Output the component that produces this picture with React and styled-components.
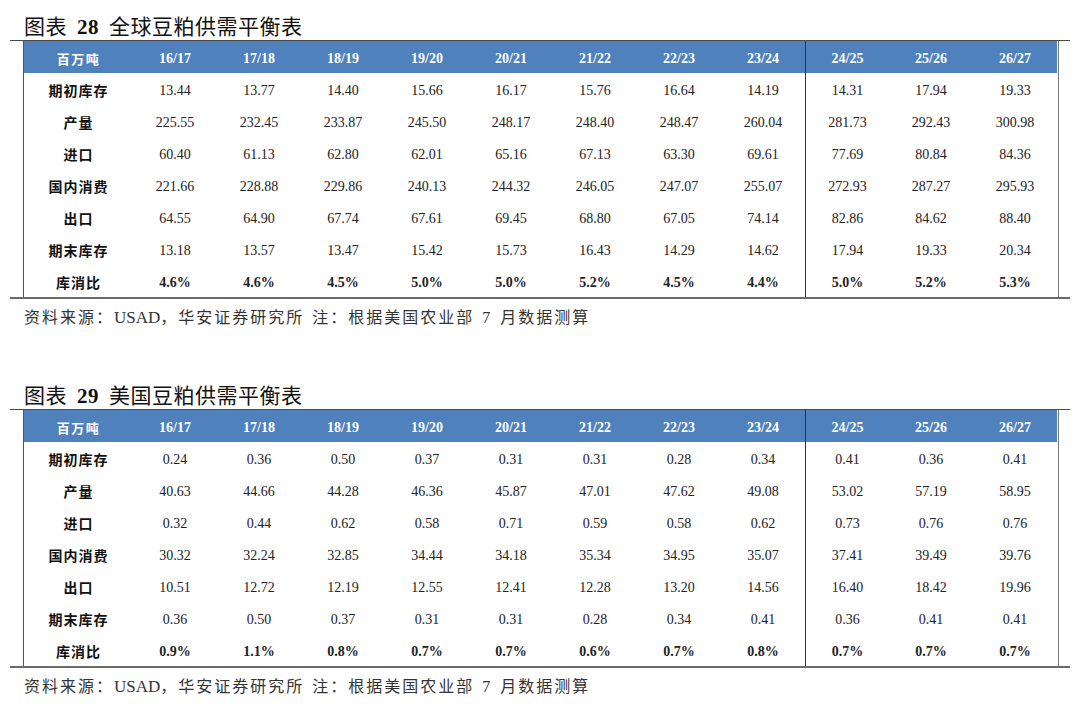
import React from 'react';
import styled, { createGlobalStyle } from 'styled-components';

const GlobalStyle = createGlobalStyle`
  html, body {
    margin: 0;
    padding: 0;
    background: #ffffff;
  }
  body {
    font-family: "Liberation Serif", "Noto Sans CJK SC", serif;
    color: #1a1a1a;
  }
`;

const Page = styled.div`
  width: 1080px;
  padding-left: 10px;
  box-sizing: border-box;
`;

const Figure = styled.section`
  width: 1060px;
  height: 369px;
`;

const Title = styled.h2`
  margin: 0;
  height: 41px;
  padding: 12px 0 0 14px;
  box-sizing: border-box;
  border-bottom: 1px solid #4a4a4a;
  font-family: "Liberation Serif", "Noto Sans CJK SC", serif;
  font-size: 21px;
  line-height: 30px;
  font-weight: 400;
  letter-spacing: 0.5px;
  color: #111;

  b {
    font-weight: 700;
    margin: 0 10px;
  }
`;

const Table = styled.div`
  margin-left: 13px;
  width: 1036px;
  border-left: 1px solid #555;
  border-right: 1px solid #777;
  box-sizing: border-box;
  display: grid;
  grid-template-columns: 109px repeat(11, 84px);
`;

const Cell = styled.div`
  height: 32px;
  padding-top: 4px;
  display: flex;
  align-items: center;
  justify-content: center;
  box-sizing: border-box;
  font-size: 14px;
  font-weight: ${(p) => (p.$bold ? 700 : 400)};
  color: #222;
  border-left: ${(p) => (p.$split ? '1px solid #333' : 'none')};
`;

const HeadCell = styled(Cell)`
  background: #4f81bd;
  color: #ffffff;
  font-weight: 700;
  font-size: 14px;
`;

const LabelCell = styled(Cell)`
  font-family: "Noto Sans CJK SC", sans-serif;
  font-weight: 700;
  font-size: 14px;
  letter-spacing: 1px;
  padding-top: 2px;
  color: #111;
`;

const HeadLabel = styled(HeadCell)`
  font-family: "Noto Sans CJK SC", sans-serif;
  font-size: 13px;
  letter-spacing: 1.5px;
  padding-top: 2px;
`;

const BottomRule = styled.div`
  height: 2px;
  background: #6b6b6b;
`;

const Source = styled.p`
  margin: 0;
  padding: 2px 0 0 14px;
  height: 34px;
  line-height: 34px;
  box-sizing: border-box;
  font-family: "Liberation Serif", "Noto Sans CJK SC", serif;
  font-size: 16px;
  letter-spacing: 2px;
  word-spacing: 2px;
  color: #333;
`;

const Latin = styled.span`
  font-size: 17px;
  letter-spacing: 0;
`;

const years = ['16/17', '17/18', '18/19', '19/20', '20/21', '21/22', '22/23', '23/24', '24/25', '25/26', '26/27'];

const globalRows = [
  ['期初库存', '13.44 13.77 14.40 15.66 16.17 15.76 16.64 14.19 14.31 17.94 19.33'],
  ['产量', '225.55 232.45 233.87 245.50 248.17 248.40 248.47 260.04 281.73 292.43 300.98'],
  ['进口', '60.40 61.13 62.80 62.01 65.16 67.13 63.30 69.61 77.69 80.84 84.36'],
  ['国内消费', '221.66 228.88 229.86 240.13 244.32 246.05 247.07 255.07 272.93 287.27 295.93'],
  ['出口', '64.55 64.90 67.74 67.61 69.45 68.80 67.05 74.14 82.86 84.62 88.40'],
  ['期末库存', '13.18 13.57 13.47 15.42 15.73 16.43 14.29 14.62 17.94 19.33 20.34'],
  ['库消比', '4.6% 4.6% 4.5% 5.0% 5.0% 5.2% 4.5% 4.4% 5.0% 5.2% 5.3%'],
];

const usRows = [
  ['期初库存', '0.24 0.36 0.50 0.37 0.31 0.31 0.28 0.34 0.41 0.36 0.41'],
  ['产量', '40.63 44.66 44.28 46.36 45.87 47.01 47.62 49.08 53.02 57.19 58.95'],
  ['进口', '0.32 0.44 0.62 0.58 0.71 0.59 0.58 0.62 0.73 0.76 0.76'],
  ['国内消费', '30.32 32.24 32.85 34.44 34.18 35.34 34.95 35.07 37.41 39.49 39.76'],
  ['出口', '10.51 12.72 12.19 12.55 12.41 12.28 13.20 14.56 16.40 18.42 19.96'],
  ['期末库存', '0.36 0.50 0.37 0.31 0.31 0.28 0.34 0.41 0.36 0.41 0.41'],
  ['库消比', '0.9% 1.1% 0.8% 0.7% 0.7% 0.6% 0.7% 0.8% 0.7% 0.7% 0.7%'],
];

// the forecast years start at column 9, marked off by a rule
const SPLIT = 8;

const BalanceTable = ({ no, name, rows }) => (
  <Figure>
    <Title>
      图表<b>{no}</b>{name}
    </Title>
    <Table>
      <HeadLabel>百万吨</HeadLabel>
      {years.map((y, i) => (
        <HeadCell key={y} $split={i === SPLIT}>{y}</HeadCell>
      ))}
      {rows.map(([label, values], r) => {
        const last = r === rows.length - 1;
        return (
          <React.Fragment key={label}>
            <LabelCell>{label}</LabelCell>
            {values.split(' ').map((v, i) => (
              <Cell key={i} $split={i === SPLIT} $bold={last}>{v}</Cell>
            ))}
          </React.Fragment>
        );
      })}
    </Table>
    <BottomRule />
    <Source>
      资料来源：<Latin>USAD</Latin>，华安证券研究所 注：根据美国农业部 7 月数据测算
    </Source>
  </Figure>
);

const App = () => (
  <Page>
    <GlobalStyle />
    <BalanceTable no="28" name="全球豆粕供需平衡表" rows={globalRows} />
    <BalanceTable no="29" name="美国豆粕供需平衡表" rows={usRows} />
  </Page>
);

export default App;
